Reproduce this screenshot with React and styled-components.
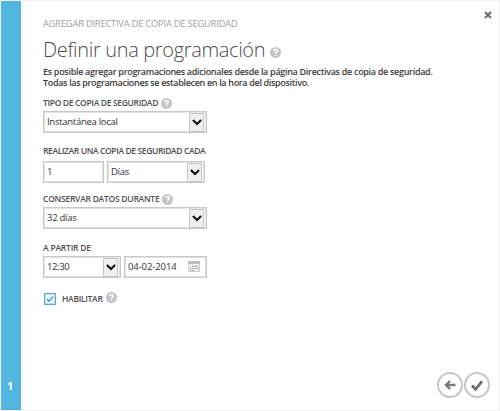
import React from 'react';
import styled, { createGlobalStyle } from 'styled-components';

const GlobalStyle = createGlobalStyle`
  * { box-sizing: border-box; }
  body { margin: 0; background: #fff; font-family: "Open Sans", "Noto Sans", sans-serif; }
`;

const Dialog = styled.div`
  display: flex;
  width: 500px;
  height: 411px;
  overflow: hidden;
  background: #fff;
  border: 1px solid #efefef;
  border-top-color: #f2f2f2;
`;

const StepRail = styled.aside`
  display: flex;
  flex: none;
  flex-direction: column;
  justify-content: flex-end;
  width: 20px;
  padding: 0 0 16px 6px;
  background: #52b5e0;
  color: #fff;
  font-size: 11px;
  font-weight: 700;
  line-height: 16px;
`;

const Main = styled.main`
  display: flex;
  flex: 1;
  flex-direction: column;
  padding: 10px 9px 12px 22px;
`;

const Header = styled.header`
  display: flex;
  justify-content: space-between;
  height: 26px;
  margin-right: -2px;
`;

const Eyebrow = styled.div`
  padding-top: 6px;
  color: #9f9f9f;
  font-size: 9.5px;
  line-height: 14px;
  letter-spacing: -0.3px;
  white-space: nowrap;
`;

const CloseButton = styled.button`
  width: 8px;
  height: 8px;
  padding: 0;
  border: 0;
  background: none;
  svg { display: block; }
`;

const Title = styled.h1`
  display: flex;
  align-items: center;
  gap: 5px;
  height: 26px;
  margin: 0;
  color: #4c4c4c;
  font-size: 20px;
  font-weight: 300;
  line-height: 26px;
  white-space: nowrap;
`;

const TitleText = styled.span`
  letter-spacing: -0.34px;
`;

const Intro = styled.p`
  height: 22px;
  margin: 3px 0 9px;
  color: #3c3c3c;
  font-size: 9px;
  font-weight: 600;
  line-height: 11px;
  white-space: nowrap;
`;

const IntroLine = styled.span`
  display: block;
  letter-spacing: ${(p) => p.$spacing};
`;

const Field = styled.section`
  height: ${(p) => p.$height}px;
`;

const Label = styled.div`
  display: flex;
  align-items: center;
  gap: 3px;
  height: 12px;
  color: #505050;
  font-size: 8.5px;
  font-weight: 600;
  line-height: 12px;
  white-space: nowrap;
`;

const LabelText = styled.span`
  letter-spacing: ${(p) => p.$spacing || '-0.3px'};
`;

const Controls = styled.div`
  display: flex;
  gap: 3px;
  margin-top: ${(p) => p.$top || 2}px;
`;

const Box = styled.div`
  display: flex;
  align-items: center;
  justify-content: space-between;
  width: ${(p) => p.$width}px;
  height: 22px;
  padding: 0 0 0 3px;
  border: 1px solid #c8c8c8;
  box-shadow: inset 0 0 0 1px #e2e2e2;
  color: #333;
  font-size: 9.5px;
  line-height: 20px;
  white-space: nowrap;
`;

const Value = styled.span`
  letter-spacing: ${(p) => p.$spacing || '-0.28px'};
`;

const Arrow = styled.span`
  display: flex;
  align-items: center;
  justify-content: center;
  width: 15px;
  height: 19px;
  margin-right: ${(p) => p.$right}px;
  border: 1px solid #c6c6c6;
  background: #efefef;
`;

const CalendarSlot = styled.span`
  display: flex;
  margin-right: 6px;
`;

const HelpSvg = styled.svg`
  display: block;
  flex: none;
  margin-top: ${(p) => p.$shift || 0}px;
`;

const EnableRow = styled.div`
  display: flex;
  align-items: center;
  height: 12px;
`;

const Checkbox = styled.span`
  display: flex;
  align-items: center;
  justify-content: center;
  width: 12px;
  height: 12px;
  margin: 0 6px 0 1px;
  border: 1px solid #5aa9d6;
  box-shadow: inset 0 0 0 1px #b9def2;
  background: #f2f9fd;
`;

const Footer = styled.footer`
  display: flex;
  justify-content: flex-end;
  gap: 1px;
  margin-top: auto;
`;

const RoundButton = styled.button`
  display: flex;
  align-items: center;
  justify-content: center;
  width: 26px;
  height: 26px;
  padding: 0;
  border: 2px solid #c6c6c6;
  border-radius: 50%;
  background: #fff;
`;

function Help({ shift }) {
  return (
    <HelpSvg width="11" height="11" viewBox="0 0 11 11" $shift={shift}>
      <circle cx="5.5" cy="5.5" r="5.5" fill="#c4c4c4" />
      <path d="M3.8 4.2C3.8 3 4.5 2.5 5.5 2.5s1.8.5 1.8 1.5c0 1.2-1.7 1.2-1.7 2.6M5.6 7.5v1.2" fill="none" stroke="#fff" strokeWidth="1.5" />
    </HelpSvg>
  );
}

function Select({ width, value, right = 2, spacing }) {
  return (
    <Box $width={width}>
      <Value $spacing={spacing}>{value}</Value>
      <Arrow $right={right}>
        <svg width="10" height="7" viewBox="0 0 10 7">
          <path d="M.9 1 5 5 9.1 1" fill="none" stroke="#111" strokeWidth="2.1" />
        </svg>
      </Arrow>
    </Box>
  );
}

function Calendar() {
  return (
    <svg width="12" height="12" viewBox="0 0 12 12">
      <path d="M.5.5h11v10H.5z" fill="#eee" stroke="#cacaca" />
      <path d="M0 0h12v3H0z" fill="#bdbdbd" />
      <path d="M4 4.5h2v1.5H4zM6.7 4.5h2v1.5h-2zM2 6.8h1.5v1.5H2zM4 6.8h2v1.5H4zM6.7 6.8h2v1.5h-2zM2 9h1.5v1H2zM4 9h2v1H4z" fill="#b6b6b6" />
      <path d="M9.3 4.5h1.2v4H9.3z" fill="#cacaca" />
    </svg>
  );
}

export default function App() {
  return (
    <>
      <GlobalStyle />
      <Dialog>
        <StepRail>1</StepRail>
        <Main>
          <Header>
            <Eyebrow>AGREGAR DIRECTIVA DE COPIA DE SEGURIDAD</Eyebrow>
            <CloseButton aria-label="Cerrar">
              <svg width="8" height="8" viewBox="0 0 8 8">
                <path d="M1 1l6 6M7 1 1 7" stroke="#666" strokeWidth="1.8" />
              </svg>
            </CloseButton>
          </Header>
          <Title>
            <TitleText>Definir una programación</TitleText>
            <Help shift={4} />
          </Title>
          <Intro>
            <IntroLine $spacing="-0.3px">Es posible agregar programaciones adicionales desde la página Directivas de copia de seguridad.</IntroLine>
            <IntroLine $spacing="-0.33px">Todas las programaciones se establecen en la hora del dispositivo.</IntroLine>
          </Intro>
          <Field $height={48}>
            <Label><LabelText $spacing="-0.33px">TIPO DE COPIA DE SEGURIDAD</LabelText><Help /></Label>
            <Controls><Select width={164} value="Instantánea local" /></Controls>
          </Field>
          <Field $height={48}>
            <Label><LabelText $spacing="-0.38px">REALIZAR UNA COPIA DE SEGURIDAD CADA</LabelText></Label>
            <Controls $top={4}>
              <Box $width={61}><Value>1</Value></Box>
              <Select width={98} value="Días" right={2} />
            </Controls>
          </Field>
          <Field $height={49}>
            <Label><LabelText $spacing="-0.25px">CONSERVAR DATOS DURANTE</LabelText><Help /></Label>
            <Controls><Select width={164} value="32 días" /></Controls>
          </Field>
          <Field $height={51}>
            <Label><LabelText $spacing="-0.2px">A PARTIR DE</LabelText></Label>
            <Controls>
              <Select width={78} value="12:30" spacing="-0.4px" />
              <Box $width={83}>
                <Value $spacing="-0.1px">04-02-2014</Value>
                <CalendarSlot><Calendar /></CalendarSlot>
              </Box>
            </Controls>
          </Field>
          <EnableRow>
            <Checkbox>
              <svg width="8" height="8" viewBox="0 0 8 8">
                <path d="M1 4l2 2.2L7 1.6" fill="none" stroke="#3c9bd0" strokeWidth="1.3" />
              </svg>
            </Checkbox>
            <Label><LabelText>HABILITAR</LabelText><Help shift={-3} /></Label>
          </EnableRow>
          <Footer>
            <RoundButton aria-label="Anterior">
              <svg width="12" height="10" viewBox="0 0 12 10">
                <path d="M11.5 5H2.2M6 1 2 5l4 4" fill="none" stroke="#777" strokeWidth="2.4" />
              </svg>
            </RoundButton>
            <RoundButton aria-label="Completar">
              <svg width="12" height="11" viewBox="0 0 12 11">
                <path d="M1 5.5l3.6 3.8L11 1.2" fill="none" stroke="#707070" strokeWidth="2.8" />
              </svg>
            </RoundButton>
          </Footer>
        </Main>
      </Dialog>
    </>
  );
}
